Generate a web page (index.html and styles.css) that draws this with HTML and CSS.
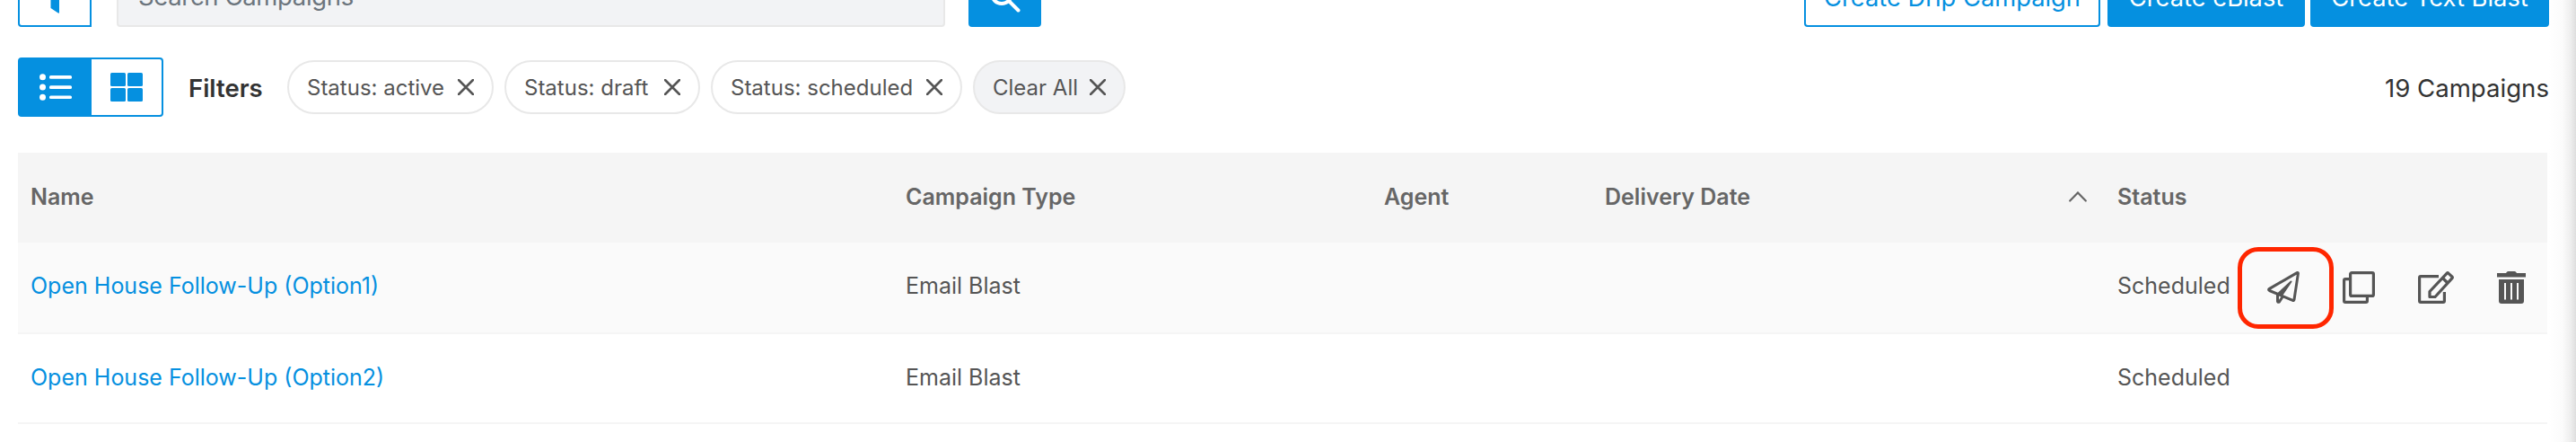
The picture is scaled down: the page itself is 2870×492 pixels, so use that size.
FILE: index.html
```html
<!DOCTYPE html>
<html lang="en">

<head>
    <meta charset="utf-8">
    <meta name="viewport" content="width=device-width, initial-scale=1.0">
    <title>Campaigns</title>
    <link rel="stylesheet" href="styles.css">
</head>

<body>
    <main class="page">
        <!-- search and create buttons -->
        <header class="topbar">
            <button class="btn btn-filter" aria-label="Filter">
                <svg width="40" height="40" viewBox="0 0 40 40"><path d="M4 3h32L25 20v16.500q0 2-1.600.800L15.500 32V20z" fill="#0590e0"/></svg>
            </button>
            <div class="search">Search Campaigns</div>
            <button class="btn btn-search" aria-label="Search">
                <svg width="36" height="36" viewBox="0 0 36 36" fill="none" stroke="#fff" stroke-width="4" stroke-linecap="round"><circle cx="14" cy="14" r="11"/><path d="M22 22l10.500 10.500"/></svg>
            </button>
            <div class="create">
                <button class="btn btn-outline drip">Create Drip Campaign</button>
                <button class="btn btn-solid eblast">Create eBlast</button>
                <button class="btn btn-solid textblast">Create Text Blast</button>
            </div>
        </header>

        <!-- view toggle and active filters -->
        <section class="filters">
            <div class="toggle">
                <span class="toggle-list">
                    <svg width="36" height="30" viewBox="0 0 36 30" fill="#fff"><circle cx="3.500" cy="3.700" r="3.500"/><circle cx="3.500" cy="15" r="3.500"/><circle cx="3.500" cy="26.300" r="3.500"/><rect x="11" y="2" width="25" height="3.700" rx="1.500"/><rect x="11" y="13.200" width="25" height="3.700" rx="1.500"/><rect x="11" y="24.400" width="25" height="3.700" rx="1.500"/></svg>
                </span>
                <span class="toggle-grid">
                    <svg width="36" height="32" viewBox="0 0 36 32" fill="#0590e0"><rect width="17" height="15" rx="1.500"/><rect x="19" width="17" height="15" rx="1.500"/><rect y="17" width="17" height="15" rx="1.500"/><rect x="19" y="17" width="17" height="15" rx="1.500"/></svg>
                </span>
            </div>
            <h2 class="filters-title">Filters</h2>
            <div class="chips">
                <span class="chip chip-active"><span>Status: active</span><svg class="x" viewBox="0 0 18 18"><path d="M1 1l16 16M17 1L1 17"/></svg></span>
                <span class="chip chip-draft"><span>Status: draft</span><svg class="x" viewBox="0 0 18 18"><path d="M1 1l16 16M17 1L1 17"/></svg></span>
                <span class="chip chip-scheduled"><span>Status: scheduled</span><svg class="x" viewBox="0 0 18 18"><path d="M1 1l16 16M17 1L1 17"/></svg></span>
                <span class="chip chip-clear"><span>Clear All</span><svg class="x" viewBox="0 0 18 18"><path d="M1 1l16 16M17 1L1 17"/></svg></span>
            </div>
            <p class="count">19 Campaigns</p>
        </section>

        <!-- campaign list -->
        <section class="table">
            <div class="row head">
                <span>Name</span>
                <span>Campaign Type</span>
                <span>Agent</span>
                <span class="sorted">Delivery Date
                    <svg width="20" height="12" viewBox="0 0 20 12" fill="none" stroke="#666" stroke-width="2.200" stroke-linecap="round"><path d="M1.200 10.500L10 1.500l8.800 9"/></svg>
                </span>
                <span>Status</span>
            </div>
            <div class="row hover">
                <a href="#" class="opt1">Open House Follow-Up (Option1)</a>
                <span>Email Blast</span>
                <span></span>
                <span></span>
                <span>Scheduled</span>
                <div class="actions">
                    <span class="marked">
                        <svg width="36" height="36" viewBox="0 0 36 36" fill="none" stroke="#555" stroke-width="3" stroke-linejoin="round" stroke-linecap="round">
                            <path d="M33.200 1.600q1.400-.5 1.200 1L30 31.500q-.3 1.500-1.600.9L2.500 21.500q-1.800-1 0-2.100z"/>
                            <path d="M11.500 25.500v8q.3 1.300 1.800.6l3.700-5.600"/>
                            <path d="M26.500 11.500L12 25l4 2z" fill="#555" stroke-width="2"/>
                        </svg>
                    </span>
                    <svg class="action" width="36" height="36" viewBox="0 0 36 36" fill="none" stroke="#555" stroke-width="3.200" stroke-linejoin="round">
                        <rect x="8.600" y="1.600" width="25.800" height="25.800" rx="1.500"/>
                        <path d="M8.500 8.600H3q-1.400 0-1.400 1.400v23q0 1.400 1.400 1.400h23q1.400 0 1.400-1.400v-5.500"/>
                    </svg>
                    <svg class="action" width="40" height="36" viewBox="0 0 40 36" fill="none" stroke="#555" stroke-width="3.200" stroke-linejoin="round">
                        <path d="M23 5.600H3q-1.400 0-1.400 1.400v26q0 1.400 1.400 1.400h25q1.400 0 1.400-1.400V23"/>
                        <path d="M13 28.500v-6L32 2.300q1-1 2 0l3.800 3.600q1 1 0 2L19 28.500zM27.500 7.500l6 6"/>
                    </svg>
                    <svg class="action" width="32" height="36" viewBox="0 0 32 36" fill="#555">
                        <path d="M0 2h10q1-2 2.500-2h7Q21 0 22 2h10v4.500H0z"/>
                        <path fill-rule="evenodd" d="M2 9h28v24q0 3-3 3H5q-3 0-3-3zM8 13v18.500h2V13zm7 0v18.500h2V13zm7 0v18.500h2V13z"/>
                    </svg>
                </div>
            </div>
            <div class="row last">
                <a href="#" class="opt2">Open House Follow-Up (Option2)</a>
                <span>Email Blast</span>
                <span></span>
                <span></span>
                <span>Scheduled</span>
            </div>
        </section>
    </main>
    <div class="edge"></div>
</body>

</html>
```
FILE: styles.css
```css
* {
    box-sizing: border-box;
}

body {
    margin: 0;
    height: 492px;
    overflow: hidden;
    display: flex;
    background: #fff;
    color: #555;
    font-family: Inter, "Liberation Sans", sans-serif;
    font-size: 24px;
}

svg {
    display: block;
    flex: none;
}

.page {
    width: 2840px;
    padding-left: 20px;
    flex: none;
}

/* shadow along the right side of the window */
.edge {
    flex: 1;
    background: linear-gradient(to right, #fff 0, #fbfbfb 50%, #eee 80%, #dedede 100%);
}

/* top bar, scrolled partly out of view */
.topbar {
    display: flex;
    height: 66px;
    margin-top: -36px;
}

.btn {
    height: 66px;
    padding: 0;
    border: 2px solid #0590e0;
    border-radius: 4px;
    background: #0590e0;
    color: #fff;
    font-family: inherit;
    font-size: 27.3px;
    white-space: nowrap;
    display: flex;
    align-items: center;
    justify-content: center;
}

.btn-filter {
    width: 82px;
    background: #fff;
    border-radius: 4px 0 0 4px;
}

.search {
    width: 923px;
    margin: 0 26px 0 28px;
    padding-left: 22px;
    border: 2px solid #e8e8e8;
    border-radius: 4px;
    background: #f2f3f5;
    color: #6c757d;
    font-size: 27.5px;
    letter-spacing: -0.35px;
    line-height: 61px;
}

.btn-search {
    width: 81px;
}

.create {
    display: flex;
    margin-left: auto;
}

.btn-outline {
    background: #fff;
    color: #0590e0;
}

.drip {
    width: 330px;
    margin-right: 8px;
}

.eblast {
    width: 220px;
    margin-right: 6px;
}

.textblast {
    width: 266px;
}

/* filters */
.filters {
    display: flex;
    align-items: center;
    height: 66px;
    margin-top: 34px;
}

.toggle {
    display: flex;
    width: 162px;
    height: 66px;
    border: 2px solid #0590e0;
    border-radius: 4px;
}

.toggle span {
    flex: 1;
    display: flex;
    align-items: center;
    justify-content: center;
}

.toggle .toggle-list {
    flex: 0 0 80px;
    background: #0590e0;
}

.filters-title {
    width: 110px;
    margin: 2px 0 0 28px;
    color: #333;
    font-size: 27.5px;
    font-weight: 600;
}

.chips {
    display: flex;
    gap: 12px;
}

.chip {
    display: flex;
    align-items: center;
    justify-content: space-between;
    height: 60px;
    padding: 0 20px;
    border: 2px solid #e8e8e8;
    border-radius: 30px;
    white-space: nowrap;
}

.chip-active {
    width: 230px;
}

.chip-draft {
    width: 218px;
}

.chip-scheduled {
    width: 280px;
}

.chip-clear {
    width: 170px;
    background: #f2f3f5;
}

.x {
    width: 18px;
    height: 18px;
    fill: none;
    stroke: #555;
    stroke-width: 2.6;
    stroke-linecap: round;
}

.count {
    margin: 2px 0 0 auto;
    color: #333;
    font-size: 27.6px;
}

/* table */
.table {
    width: 2818px;
    margin-top: 40px;
}

.row {
    position: relative;
    display: grid;
    grid-template-columns: 975px 533px 246px 571px 1fr;
    align-items: center;
    height: 102px;
    padding: 0 0 5px 14px;
    border-bottom: 2px solid #f5f5f5;
    font-size: 25px;
    white-space: nowrap;
}

.row a {
    color: #0590e0;
    text-decoration: none;
}

.head {
    height: 100px;
    padding-bottom: 2px;
    border-bottom: 0;
    background: #f5f5f5;
    color: #666;
    font-weight: 600;
}

.sorted {
    display: flex;
    align-items: center;
    justify-content: space-between;
    padding-right: 34px;
}

.hover {
    background: #fafafa;
}

.last {
    height: 100px;
    padding-bottom: 2px;
}

/* row actions lie over the status cell */
.actions {
    position: absolute;
    top: 0;
    right: 24px;
    height: 100px;
    display: flex;
    align-items: center;
}

.marked {
    width: 107px;
    height: 91px;
    margin-right: 10px;
    padding-right: 5px;
    border: 5px solid #ff2600;
    border-radius: 23px;
    display: flex;
    align-items: center;
    justify-content: center;
}

.action + .action {
    margin-left: 48px;
}
```
